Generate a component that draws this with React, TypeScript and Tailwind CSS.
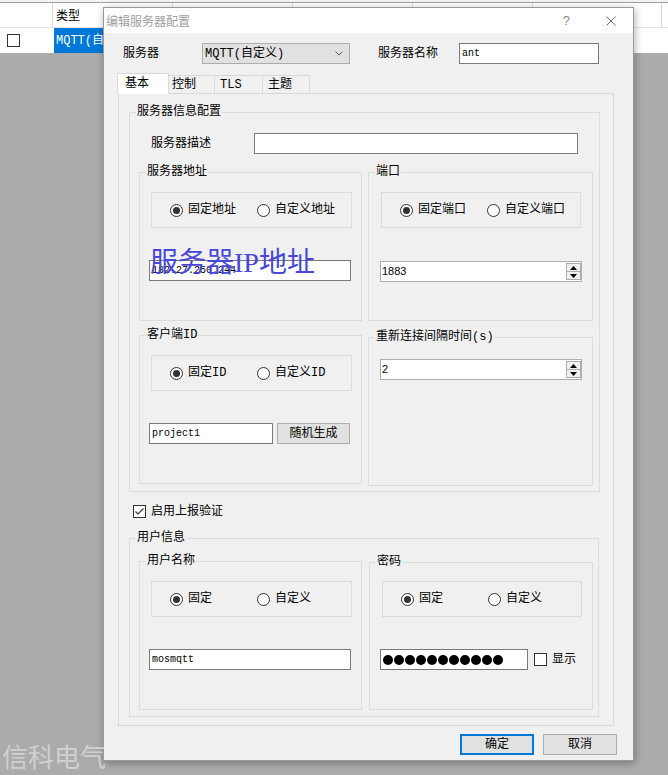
import type { ReactNode } from "react";

function GroupBox({ title, className, children }: { title: ReactNode; className: string; children?: ReactNode }) {
  return (
    <fieldset className={`shrink-0 border border-[#dcdcdc] ${className}`}>
      <legend className="ml-[6px] px-px leading-4">{title}</legend>
      {children}
    </fieldset>
  );
}

function Radio({ label, checked = false }: { label: string; checked?: boolean }) {
  return (
    <div className="flex w-[87px] shrink-0 items-center">
      <span className="flex h-[13px] w-[13px] items-center justify-center rounded-full border border-[#333333] bg-white">
        {checked && <span className="h-[7px] w-[7px] rounded-full bg-[#333333]" />}
      </span>
      <span className="ml-[5px] leading-4">{label}</span>
    </div>
  );
}

function RadioBox({ left, right, className }: { left: string; right: string; className: string }) {
  return (
    <div className={`flex h-[36px] items-center border border-[#dcdcdc] pl-[18px] ${className}`}>
      <Radio label={left} checked />
      <Radio label={right} />
    </div>
  );
}

function TextBox({ value, className, children }: { value?: string; className: string; children?: ReactNode }) {
  return (
    <div
      className={`relative flex h-[21px] shrink-0 items-center border border-[#7a7a7a] bg-white pl-[2px] font-['Liberation_Mono',monospace] text-[10px] ${className}`}
    >
      {value}
      {children}
    </div>
  );
}

function SpinBox({ value, className }: { value: string; className: string }) {
  return (
    <div className={`flex h-[21px] w-[202px] items-center border border-[#adadad] bg-white ${className}`}>
      <span className="flex-1 pl-px font-['Liberation_Sans',sans-serif] text-[11px]">{value}</span>
      <div className="flex h-[17px] w-[15px] flex-col border border-[#adadad] bg-[#f0f0f0]">
        <div className="flex flex-1 items-center justify-center border-b border-[#adadad]">
          <svg width="7" height="4" viewBox="0 0 7 4">
            <path d="M3.5 0L7 4H0z" fill="#000" />
          </svg>
        </div>
        <div className="flex flex-1 items-center justify-center">
          <svg width="7" height="4" viewBox="0 0 7 4">
            <path d="M0 0h7L3.5 4z" fill="#000" />
          </svg>
        </div>
      </div>
    </div>
  );
}

function CheckBox({ checked = false }: { checked?: boolean }) {
  return (
    <span className="flex h-[13px] w-[13px] shrink-0 items-center justify-center border border-[#333333] bg-white">
      {checked && (
        <svg width="11" height="11" viewBox="0 0 11 11">
          <path d="M1.5 5.5L4 8L9.5 2.5" stroke="#333" strokeWidth="1.1" fill="none" />
        </svg>
      )}
    </span>
  );
}

export default function App() {
  return (
    <div className="relative h-[775px] w-[668px] overflow-hidden bg-[#ababab] font-['Liberation_Mono','Noto_Sans_CJK_SC',monospace] text-[12px] text-black">
      {/* table behind the dialog */}
      <div className="bg-white">
        <div className="h-[2px] bg-[#f3f3f3]" />
        <div className="grid h-[26px] grid-cols-[53px_120px_120px_120px_120px_129px] border-y border-t-[#a0a0a0] border-b-[#e3e3e3]">
          <div className="border-r border-[#dadada]" />
          <div className="flex items-center border-r border-[#dadada] pl-[3px] font-['Noto_Sans_CJK_SC',sans-serif]">类型</div>
          <div className="border-r border-[#dadada]" />
          <div className="border-r border-[#dadada]" />
          <div className="border-r border-[#dadada]" />
          <div className="border-r border-[#dadada]" />
        </div>
        <div className="flex h-[25px] items-center">
          <div className="flex w-[54px] items-center pl-[7px]">
            <CheckBox />
          </div>
          <div className="flex h-full w-[200px] items-center bg-[#0078d7] pl-[2px] text-white">MQTT(自定义)</div>
        </div>
      </div>

      {/* dialog window */}
      <div className="absolute left-[103px] top-[7px] flex h-[754px] w-[531px] flex-col border border-[#9a9a9a] bg-[#f0f0f0] shadow-[1px_2px_8px_rgba(0,0,0,0.3)]">
        <div className="flex h-[25px] shrink-0 items-center bg-white pl-[2px] text-[#a0a0a0]">
          <span className="font-['Noto_Sans_CJK_SC',sans-serif]">编辑服务器配置</span>
          <span className="ml-auto font-['Liberation_Sans',sans-serif] text-[13px] text-[#8a8a8a]">?</span>
          <svg className="ml-[36px] mr-[17px]" width="10" height="10" viewBox="0 0 10 10">
            <path d="M0.5 0.5L9.5 9.5M9.5 0.5L0.5 9.5" stroke="#707070" strokeWidth="1" />
          </svg>
        </div>

        <div className="mt-[10px] flex h-[21px] items-center">
          <span className="ml-[19px] w-[79px]">服务器</span>
          <div className="flex h-[21px] w-[148px] items-center border border-[#adadad] bg-[#e1e1e1] pl-[2px]">
            <span className="flex-1">MQTT(自定义)</span>
            <svg className="mr-[6px]" width="8" height="5" viewBox="0 0 8 5">
              <path d="M0.5 0.5L4 4L7.5 0.5" stroke="#606060" fill="none" />
            </svg>
          </div>
          <span className="ml-[28px] w-[81px]">服务器名称</span>
          <TextBox value="ant" className="w-[140px]" />
        </div>

        {/* tabs */}
        <div className="mt-[9px] flex h-[20px] items-end pl-[13px]">
          <div className="relative z-10 -mb-px flex h-[21px] w-[52px] items-center border-x border-t border-[#d9d9d9] bg-white pl-[7px]">基本</div>
          <div className="flex h-[18px] w-[46px] items-center border-r border-t border-[#d9d9d9] pl-[3px]">控制</div>
          <div className="flex h-[18px] w-[48px] items-center border-r border-t border-[#d9d9d9] pl-[5px]">TLS</div>
          <div className="flex h-[18px] w-[47px] items-center border-r border-t border-[#d9d9d9] pl-[5px]">主题</div>
        </div>

        <div className="ml-[14px] h-[633px] w-[496px] shrink-0 border border-[#d9d9d9]">
          <GroupBox title="服务器信息配置" className="ml-[10px] mt-[10px] h-[388px] w-[471px]">
            <div className="mt-[13px] flex h-[21px] items-center">
              <span className="ml-[21px] w-[103px]">服务器描述</span>
              <TextBox className="w-[324px]" />
            </div>

            <div className="ml-[9px] mt-[10px] flex items-start">
              <GroupBox title="服务器地址" className="h-[157px] w-[223px]">
                <RadioBox left="固定地址" right="自定义地址" className="ml-[11px] mt-[12px] w-[201px]" />
                <TextBox value="182.27.250.244" className="ml-[9px] mt-[32px] w-[202px]">
                  <span className="pointer-events-none absolute left-0 top-[-12px] whitespace-nowrap font-['Liberation_Serif','Noto_Sans_CJK_SC',serif] text-[28px] leading-none text-[#4848d8]">
                    服务器IP地址
                  </span>
                </TextBox>
              </GroupBox>
              <GroupBox title="端口" className="ml-[6px] h-[157px] w-[225px]">
                <RadioBox left="固定端口" right="自定义端口" className="ml-[12px] mt-[12px] w-[200px]" />
                <SpinBox value="1883" className="ml-[11px] mt-[33px]" />
              </GroupBox>
            </div>

            <div className="ml-[9px] mt-[6px] flex items-start">
              <GroupBox title="客户端ID" className="h-[157px] w-[223px]">
                <RadioBox left="固定ID" right="自定义ID" className="ml-[11px] mt-[12px] w-[201px]" />
                <div className="ml-[9px] mt-[32px] flex">
                  <TextBox value="project1" className="w-[124px]" />
                  <button className="ml-[4px] flex h-[21px] w-[73px] items-center justify-center border border-[#adadad] bg-[#e1e1e1]">
                    随机生成
                  </button>
                </div>
              </GroupBox>
              <GroupBox title="重新连接间隔时间(s)" className="ml-[6px] mt-[2px] h-[157px] w-[225px]">
                <SpinBox value="2" className="ml-[11px] mt-[14px]" />
              </GroupBox>
            </div>
          </GroupBox>

          <div className="ml-[14px] mt-[13px] flex h-[13px] items-center">
            <CheckBox checked />
            <span className="ml-[5px] leading-4">启用上报验证</span>
          </div>

          <GroupBox title="用户信息" className="ml-[10px] mt-[12px] h-[187px] w-[470px]">
            <div className="ml-[9px] mt-[7px] flex items-start">
              <GroupBox title="用户名称" className="h-[157px] w-[223px]">
                <RadioBox left="固定" right="自定义" className="ml-[11px] mt-[12px] w-[201px]" />
                <TextBox value="mosmqtt" className="ml-[9px] mt-[32px] w-[202px]" />
              </GroupBox>
              <GroupBox title="密码" className="ml-[7px] mt-px h-[156px] w-[224px]">
                <RadioBox left="固定" right="自定义" className="ml-[12px] mt-[11px] w-[200px]" />
                <div className="ml-[10px] mt-[32px] flex items-center">
                  <div className="flex h-[21px] w-[148px] items-center gap-px border border-[#7a7a7a] bg-white pl-[2px]">
                    {Array.from({ length: 11 }).map((_, i) => (
                      <span key={i} className="h-[10px] w-[10px] rounded-full bg-black" />
                    ))}
                  </div>
                  <span className="ml-[6px]">
                    <CheckBox />
                  </span>
                  <span className="ml-[5px] leading-4">显示</span>
                </div>
              </GroupBox>
            </div>
          </GroupBox>
        </div>

        <div className="mt-[8px] flex justify-end gap-[9px] pr-[16px]">
          <button className="flex h-[21px] w-[74px] items-center justify-center border-2 border-[#0078d7] bg-[#e1e1e1]">确定</button>
          <button className="flex h-[21px] w-[74px] items-center justify-center border border-[#adadad] bg-[#e1e1e1]">取消</button>
        </div>
      </div>

      <div className="pointer-events-none absolute left-[2px] top-[743px] z-20 font-['Noto_Sans_CJK_SC',sans-serif] text-[26px] leading-none text-[#d0d0d0]">
        信科电气
      </div>
    </div>
  );
}
